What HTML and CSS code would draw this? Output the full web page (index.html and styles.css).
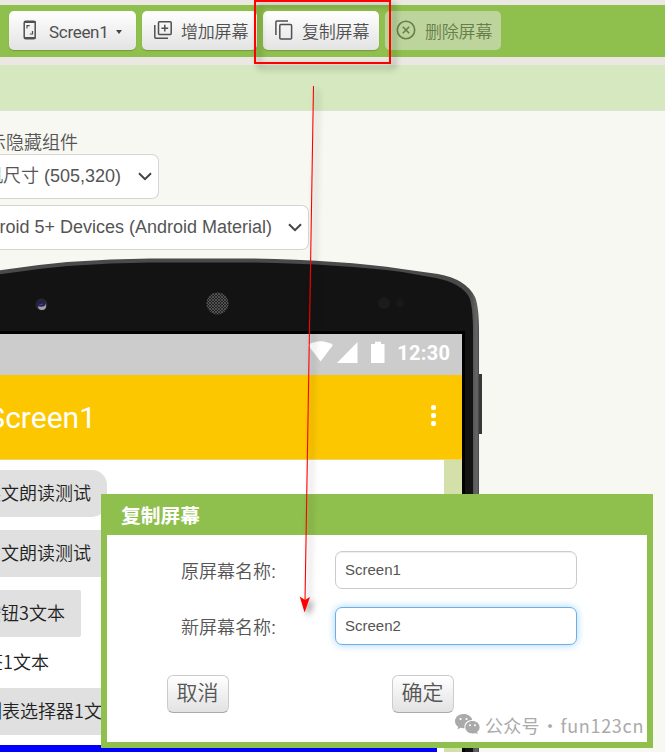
FILE: index.html
```html
<!DOCTYPE html>
<html lang="zh-CN">
<head>
<meta charset="utf-8">
<title>复制屏幕</title>
<link rel="stylesheet" href="styles.css">
</head>
<body>
<nav class="toolbar">
  <button class="tool screen-tool">
    <svg width="14" height="20" viewBox="0 0 14 20" fill="none" stroke="#505050"><rect x="1.2" y="1.2" width="11" height="17.6" rx="1.5" stroke-width="1.5"/><path d="M1 2h11.5M1 18h11.5" stroke-width="2.2"/><path d="M4 8.5V5.7H6.8M9.5 11v3H6.8" stroke-width="1.2"/></svg>
    <span>Screen1</span><i class="caret"></i>
  </button>
  <button class="tool add-tool">
    <svg width="18" height="18" viewBox="0 0 18 18" fill="none" stroke="#505050" stroke-width="1.5"><rect x="4.5" y=".8" width="12.7" height="12.7" rx="1"/><path d="M.8 4v12.2q0 1 1 1H14M10.8 3.8v6.8M7.4 7.2h6.8"/></svg>
    <span>增加屏幕</span>
  </button>
  <button class="tool copy-tool">
    <svg width="18" height="20" viewBox="0 0 18 20" fill="none" stroke="#505050" stroke-width="1.5"><rect x="4.8" y="4.6" width="11.8" height="14.4" rx="1"/><path d="M.9 15V2q0-1 1-1H13"/></svg>
    <span>复制屏幕</span>
  </button>
  <button class="tool delete-tool">
    <svg width="20" height="20" viewBox="0 0 20 20" fill="none" stroke="#687d4b" stroke-width="1.6"><circle cx="10" cy="10" r="8.7"/><path d="M6.8 6.8l6.4 6.4M13.2 6.8l-6.4 6.4"/></svg>
    <span>删除屏幕</span>
  </button>
</nav>
<div class="panel-head"></div>
<main class="viewer">
  <div class="hidden-label">显示隐藏组件</div>
  <div class="select size-select"><span>手机尺寸 (505,320)</span><svg width="14" height="9" viewBox="0 0 14 9" fill="none" stroke="#444" stroke-width="2"><path d="M1 1.2l6 6 6-6"/></svg></div>
  <div class="select theme-select"><span>Android 5+ Devices (Android Material)</span><svg width="14" height="9" viewBox="0 0 14 9" fill="none" stroke="#444" stroke-width="2"><path d="M1 1.2l6 6 6-6"/></svg></div>
  <section class="phone">
    <svg class="phone-frame" width="483" height="500" viewBox="0 0 483 500">
      <defs>
        <linearGradient id="edge" x1="470" x2="480" y1="0" y2="0" gradientUnits="userSpaceOnUse"><stop offset="0" stop-color="#4a4a4a"/><stop offset=".7" stop-color="#666"/><stop offset="1" stop-color="#333"/></linearGradient>
        <pattern id="mesh" width="3" height="3" patternUnits="userSpaceOnUse"><rect width="3" height="3" fill="#222"/><path d="M0 0l3 3M3 0L0 3" stroke="#666" stroke-width=".65"/></pattern>
      </defs>
      <rect x="476" y="116" width="6" height="60" fill="#383838"/>
      <path d="M-10 14Q65 1 150 0.5H250Q340 2 402 11L438 16Q466 21 475 39Q479 48 479 75V500H-10Z" fill="url(#edge)"/>
      <path d="M-10 18Q65 5 150 4.5H250Q340 6 402 14L436 20Q461 25 469 39Q473 48 473 75V500H-10Z" fill="#131313"/>
      <path d="M0 74.5h463.500V500" fill="none" stroke="#000" stroke-width="3"/>
      <circle cx="41.5" cy="46.5" r="6" fill="#292929"/><circle cx="42" cy="48" r="4" fill="#a5a0a5"/><ellipse cx="41" cy="45.5" rx="4.5" ry="3.2" fill="#22204c"/><path d="M39 47l4-1" stroke="#4b42b0"/>
      <circle cx="217.500" cy="45.500" r="11" fill="url(#mesh)"/>
      <circle cx="384" cy="45" r="6" fill="#1b1b1b"/><circle cx="400" cy="45" r="4" fill="#191919"/>
    </svg>
    <div class="screen">
      <div class="status">
        <svg width="77" height="23" viewBox="0 0 77 23" fill="#fff"><path d="M0 4Q12.500-3.500 25 4L12.500 20.500Z"/><path d="M29 22L49.500 1V22Z"/><path d="M63 3h4V.8h6V3h3.500v19H63Z"/></svg>
        <span>12:30</span>
      </div>
      <div class="appbar"><span>Screen1</span><i class="more"><b></b><b></b><b></b></i></div>
      <div class="content">
        <div class="components">
          <div class="component rounded">英文朗读测试</div>
          <div class="component square">中文朗读测试</div>
          <div class="component small">按钮3文本</div>
          <div class="text-label">标签1文本</div>
          <div class="component picker">列表选择器1文本</div>
          <div class="canvas"></div>
        </div>
      </div>
    </div>
  </section>
</main>
<section class="dialog">
  <h1>复制屏幕</h1>
  <form>
    <div class="row"><label for="old">原屏幕名称:</label><input id="old" value="Screen1"></div>
    <div class="row"><label for="new">新屏幕名称:</label><input class="active" id="new" value="Screen2"></div>
    <div class="actions"><button type="button">取消</button><button type="button">确定</button></div>
  </form>
</section>
<div class="watermark">
  <svg width="25" height="21" viewBox="0 0 25 21"><path d="M8.500 0C3.700 0 0 3.200 0 7.200c0 2.300 1.300 4.200 3.200 5.500l-.8 2.700 3.100-1.600q2 .6 4 .4C8.800 9 12.500 6 17.300 6 16.500 2.500 13 0 8.500 0Z" fill="#aaa"/><path d="M17.500 7c-4 0-7.200 2.700-7.200 6.200s3.200 6.200 7.200 6.200q1.500 0 2.800-.5l2.500 1.400-.7-2.300c1.600-1.200 2.500-2.800 2.500-4.800 0-3.500-3.200-6.200-7.100-6.200Z" fill="#aaa"/><g fill="#fff"><circle cx="5.600" cy="5" r="1.100"/><circle cx="11.500" cy="5" r="1.100"/><circle cx="15" cy="11.300" r="1"/><circle cx="20" cy="11.300" r="1"/></g></svg>
  <span class="account">公众号</span><span class="dot">·</span><span class="handle">fun123cn</span>
</div>
<svg class="annotation" width="665" height="752" viewBox="0 0 665 752">
  <g class="mark"><rect x="255" y="1" width="135" height="62" fill="none" stroke="#f00" stroke-width="2"/>
  <path d="M313.500 86L305 601" stroke="#f00" stroke-width="1.100"/><path d="M304.600 612.500L299.700 596.500L305 600L310 597Z" fill="#f00"/></g>
</svg>
</body>
</html>
```
FILE: styles.css
```css
* { box-sizing: border-box; }
body {
  margin: 0;
  width: 665px;
  height: 752px;
  overflow: hidden;
  position: relative;
  background: #f7f8f1;
  color: #555;
  font: 350 18px "Liberation Sans", "Noto Sans CJK SC", sans-serif;
}
button, input { font: inherit; color: inherit; }
svg { display: block; flex: none; }

.toolbar {
  height: 65px;
  padding: 6px 9px 7px;
  display: flex;
  gap: 6px;
  border-top: 5px solid #ebe8e3;
  border-bottom: 8px solid #ebe8e4;
  background: #8fbf4d;
}
.tool {
  height: 39px;
  display: flex;
  align-items: center;
  border: 0;
  border-radius: 5px;
  background: linear-gradient(#fff, #e3e3e3);
  box-shadow: 0 1px 1px #79983f;
  color: #505050;
  font: 350 17px/24px Roboto, "Noto Sans CJK SC", sans-serif;
  white-space: nowrap;
  padding: 0 0 2px;
}
.tool span { margin-top: 5px; letter-spacing: -.2px; }
.screen-tool { width: 127px; padding-left: 14px; }
.screen-tool span { margin-left: 12px; font-weight: 400; letter-spacing: -.3px; }
.caret { margin: 4px 0 0 8px; border: 3.5px solid transparent; border-top: 4px solid #444; border-bottom: 0; }
.add-tool { width: 115px; padding-left: 12px; }
.add-tool span { margin-left: 9px; }
.copy-tool { width: 116px; padding-left: 12px; }
.copy-tool span { margin-left: 9px; }
.delete-tool { width: 116px; padding-left: 11px; background: #bdd59c; box-shadow: none; color: #687d4b; }
.delete-tool span { margin-left: 9px; }
.panel-head { height: 46px; background: #d5e8bf; border-bottom: 1px solid #dce4d1; }

.viewer { width: 483px; padding-top: 19px; }
.hidden-label {
  width: 78px;
  height: 24px;
  overflow: hidden;
  display: flex;
  justify-content: flex-end;
  line-height: 26px;
  white-space: nowrap;
}
.select {
  height: 45px;
  border: 1px solid #d5d5d3;
  border-left: 0;
  border-radius: 0 7px 7px 0;
  background: #fff;
  display: flex;
  align-items: center;
  justify-content: flex-end;
  gap: 17px;
  padding-right: 6px;
  overflow: hidden;
  white-space: nowrap;
}
.size-select { width: 159px; }
.size-select span { margin-bottom: 5px; }
.theme-select { width: 309px; margin-top: 6px; }
.theme-select span { margin-right: -1px; }
.phone { position: relative; margin-top: 8px; padding-top: 76px; height: 494px; }
.phone-frame { position: absolute; left: 0; top: 0; }
.screen { position: relative; width: 462px; height: 418px; background: #fff; }
.status {
  height: 41px;
  padding: 0 12px 4px 0;
  display: flex;
  align-items: center;
  justify-content: flex-end;
  gap: 12px;
  background: #ccc;
  color: #fff;
  font: 700 20px Roboto, sans-serif;
}
.status span { letter-spacing: .3px; margin-right: -.3px; }
.appbar {
  height: 85px;
  padding-right: 26px;
  display: flex;
  align-items: center;
  background: #fdc700;
  color: #fff;
  font: 400 30px Roboto, sans-serif;
  border-bottom: 1px solid #f1d46b;
}
.appbar span { width: 96px; display: flex; justify-content: flex-end; }
.more { margin: -3px 0 0 auto; display: grid; gap: 3px; }
.more b { width: 5px; height: 5px; border-radius: 2px; background: #fff; }
.content { height: 292px; border-right: 18px solid #d3e0a9; }
.components { width: 437px; padding-top: 10px; }
.component, .text-label {
  height: 47px;
  padding: 0 16px 3px 0;
  display: flex;
  justify-content: flex-end;
  align-items: center;
  overflow: hidden;
  white-space: nowrap;
  background: #e0e0e0;
  color: #222;
  font: 350 18px "Noto Sans CJK SC", sans-serif;
  margin-bottom: 13px;
}
.rounded { width: 107px; border-radius: 0 15px 15px 0; }
.square { width: 107px; }
.small { width: 81px; border-radius: 0 2px 2px 0; }
.text-label { width: 49px; height: 25px; padding: 0 0 3px; background: none; }
.picker { width: 136px; margin-bottom: 10px; }
.canvas { height: 10px; background: #00f; }

.dialog {
  position: absolute;
  left: 101px;
  top: 494px;
  width: 552px;
  height: 254px;
  border: 6px solid #8fbf4d;
  border-top: 0;
  background: #fff;
}
.dialog h1 { margin: 0; height: 41px; padding-left: 14px; background: #8fbf4d; color: #fff; font: 700 19.8px/41px "Noto Sans CJK SC", sans-serif; }
.dialog form { padding: 16px 60px 0; }
.row { display: flex; align-items: center; height: 38px; margin-bottom: 18px; padding-left: 14px; }
.row label { width: 154px; padding-bottom: 1px; }
.row input {
  width: 242px;
  height: 38px;
  border: 1px solid #ccc;
  border-radius: 7px;
  padding: 0 9px 2px;
  background: #fff;
  font-size: 15px;
  box-shadow: inset 0 1px 1px #eee;
  outline: 0;
}
.row .active { border-color: #6caee8; box-shadow: 0 0 9px #a7d4fa; }
.actions { display: flex; gap: 163px; margin-top: 30px; }
.actions button { width: 62px; height: 38px; border: 1px solid #ccc; border-bottom-color: #aaa; border-radius: 6px; padding: 0 1px 2px 0; background: linear-gradient(#fff, #e2e2e2); font-size: 21px; line-height: 30px; }

.watermark {
  position: absolute;
  left: 455px;
  top: 711px;
  height: 27px;
  display: flex;
  align-items: center;
  color: #aaa;
  font: 400 18px "Noto Sans CJK SC", sans-serif;
  white-space: nowrap;
}
.account { margin-left: 5px; letter-spacing: .2px; }
.dot { width: 21px; text-align: center; }
.handle { letter-spacing: .7px; }
.annotation { position: absolute; inset: 0; pointer-events: none; }
.mark { filter: drop-shadow(4px 4px 3px rgb(0 0 0 / .4)); }
```
